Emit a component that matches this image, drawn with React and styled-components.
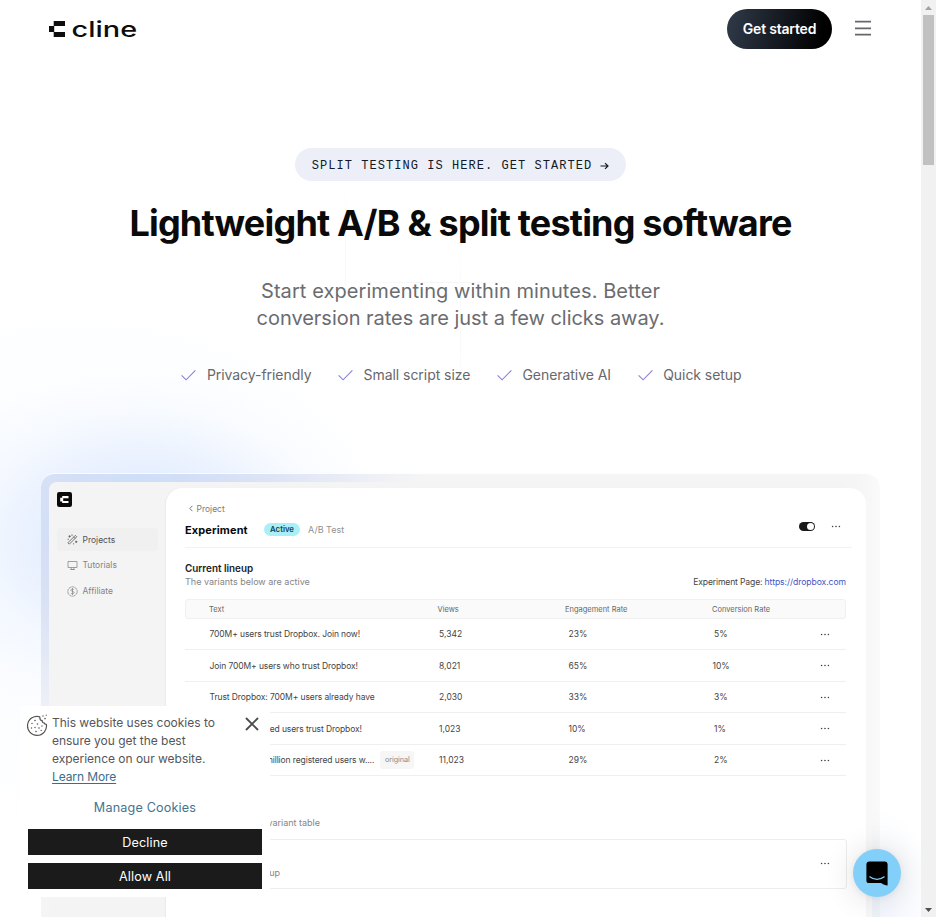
import React from 'react';
import styled, { createGlobalStyle, css } from 'styled-components';

const GlobalStyle = createGlobalStyle`
  *, *::before, *::after { box-sizing: border-box; }
  html, body { margin: 0; padding: 0; overflow: hidden; }
  body { background: #fff; font-family: Inter, sans-serif; color: #0a0a0a; }
  button { font: inherit; border: 0; margin: 0; cursor: pointer; }
  svg { display: block; flex: none; }
`;

const Viewport = styled.div`
  display: flex;
  width: 936px;
  height: 917px;
  overflow: hidden;
`;

const Page = styled.main`
  position: relative;
  flex: 1;
  min-width: 0;
  display: flex;
  flex-direction: column;
  overflow: hidden;
  background:
    linear-gradient(to bottom, transparent, #f9f9fa 40%, #f9f9fa 80%, transparent) 345px 180px / 1px 130px no-repeat,
    linear-gradient(to bottom, transparent, #f9f9fa 40%, #f9f9fa 80%, transparent) 460px 240px / 1px 140px no-repeat,
    linear-gradient(to right, transparent, #f6f6f7 40%, #f6f6f7 70%, transparent) 330px 282px / 200px 1px no-repeat,
    radial-gradient(ellipse 230px 165px at 150px 535px, rgba(200, 220, 253, 0.68), rgba(208, 225, 253, 0.4) 42%, rgba(226, 236, 254, 0.14) 76%, transparent),
    radial-gradient(ellipse 360px 280px at 80px 560px, rgba(224, 235, 255, 0.42), rgba(240, 246, 255, 0.2) 60%, transparent),
    radial-gradient(ellipse 60px 110px at 880px 917px, rgba(225, 233, 252, 0.4), transparent),
    #fff;
`;

const Header = styled.header`
  height: 58px;
  flex: none;
  padding: 0 49px;
  display: flex;
  align-items: center;
  justify-content: space-between;
`;

const HeaderActions = styled.div`
  display: flex;
  align-items: center;
  gap: 22px;
`;

const GetStarted = styled.button`
  width: 105px;
  height: 40px;
  border-radius: 20px;
  background: linear-gradient(100deg, #303a49, #000 90%);
  color: #fff;
  font-size: 14px;
  font-weight: 600;
  letter-spacing: -0.2px;
  padding: 0 0 2px;
`;

const Hero = styled.section`
  display: flex;
  flex-direction: column;
  align-items: center;
  flex: none;
  padding-top: 90px;
`;

const Announcement = styled.a`
  display: flex;
  align-items: center;
  justify-content: center;
  gap: 8px;
  width: 331px;
  height: 33px;
  padding-top: 2px;
  border-radius: 17px;
  background: #eceff7;
  color: #111827;
  font: 12px 'Liberation Mono', monospace;
  letter-spacing: 1.05px;
  white-space: nowrap;
`;

const Title = styled.h1`
  margin: 22px 0 0;
  font-size: 36px;
  line-height: 40px;
  font-weight: 700;
  letter-spacing: -0.81px;
  white-space: nowrap;
`;

const Subtitle = styled.p`
  margin: 35px 0 0;
  width: 430px;
  text-align: center;
  font-size: 20px;
  line-height: 27px;
  color: #6b6c70;
`;

const SubtitleLine = styled.span`
  display: block;
  white-space: nowrap;
  letter-spacing: ${p => p.$tracking}px;
`;

const Features = styled.ul`
  list-style: none;
  margin: 33px 0 0;
  padding: 0 0 0 2px;
  display: flex;
  gap: 26.6px;
`;

const Feature = styled.li`
  display: flex;
  align-items: center;
  gap: 10.5px;
  font-size: 14px;
  line-height: 20px;
  letter-spacing: -0.05px;
  color: #67686c;
  white-space: nowrap;
`;

const Frame = styled.section`
  margin: 88px auto 0;
  width: 839px;
  height: 560px;
  flex: none;
  padding: 8px;
  border-radius: 14px;
  border-top: 1px solid rgba(255, 255, 255, 0.8);
  background:
    radial-gradient(ellipse 290px 250px at 90px 20px, rgba(194, 214, 251, 0.5), rgba(198, 210, 246, 0.3) 60%, transparent),
    linear-gradient(to right, rgba(0, 0, 0, 0.038) 97%, rgba(0, 0, 0, 0.018));
`;

const AppWindow = styled.div`
  display: flex;
  width: 823px;
  height: 552px;
  padding: 5.5px 6px 0 0;
  border-radius: 8px;
  background: linear-gradient(to right, #f4f4f4 96%, #f6f6f6 98.5%, #f8f8f8);
`;

const Sidebar = styled.nav`
  width: 117px;
  padding: 4.5px 8px;
  display: flex;
  flex-direction: column;
`;

const SideList = styled.div`
  margin-top: 21px;
  display: flex;
  flex-direction: column;
  gap: 2.8px;
`;

const SideItem = styled.a`
  display: flex;
  align-items: center;
  gap: 5px;
  height: 23px;
  padding-left: 9.5px;
  border-radius: 4px;
  font-size: 8.5px;
  color: ${p => (p.$active ? '#505050' : '#858585')};
  background: ${p => (p.$active ? '#f0f0f0' : 'transparent')};
`;

const Panel = styled.div`
  width: 700px;
  padding: 15px 20px 0 19px;
  border-radius: 16px 16px 0 0;
  background: #fff;
  box-shadow: -1px 0 1px rgba(0, 0, 0, 0.04);
`;

const Breadcrumb = styled.div`
  display: flex;
  align-items: center;
  gap: 4px;
  height: 12px;
  padding-left: 3.5px;
  font-size: 8.5px;
  color: #7b7b7b;
`;

const ExperimentBar = styled.div`
  display: flex;
  align-items: center;
  height: 17px;
  margin-top: 6px;
`;

const ExperimentName = styled.strong`
  font-size: 11px;
  width: 79px;
  padding-top: 1px;
  letter-spacing: 0.12px;
`;

const StatusPill = styled.span`
  width: 36px;
  height: 13px;
  border-radius: 7px;
  background: #a9effa;
  color: #16434c;
  font-size: 7.8px;
  font-weight: 600;
  line-height: 13px;
  text-align: center;
`;

const TestKind = styled.span`
  margin-left: 8px;
  font-size: 9px;
  color: #919191;
`;

const BarControls = styled.div`
  margin-left: auto;
  margin-top: -6px;
  padding-right: 5px;
  display: flex;
  align-items: center;
  gap: 16px;
`;

const Toggle = styled.span`
  display: flex;
  justify-content: flex-end;
  width: 16px;
  height: 9px;
  padding: 1px;
  border-radius: 5px;
  background: #19191b;
  &::after {
    content: '';
    width: 7px;
    height: 7px;
    border-radius: 50%;
    background: #fff;
  }
`;

const Rule = styled.hr`
  border: 0;
  height: 1px;
  margin: 9.5px -6px 0 0;
  background: #f2f2f2;
`;

const SectionTitle = styled.h2`
  margin: 13px 0 0;
  font-size: 9.9px;
  line-height: 14px;
  font-weight: 600;
  color: #1c1c1c;
`;

const SectionMeta = styled.div`
  display: flex;
  justify-content: space-between;
  height: 14px;
  line-height: 14px;
  font-size: 9px;
  color: #858585;
`;

const PageRef = styled.span`
  font-size: 8.6px;
  letter-spacing: -0.15px;
  color: #444;
  a { color: #4653c6; letter-spacing: -0.07px; }
`;

const columns = css`
  display: grid;
  grid-template-columns: 228.5px 127.5px 147px 1fr 10px;
  align-items: center;
  padding: 0 16px 0 24.5px;
`;

const TableHead = styled.div`
  ${columns}
  width: 661px;
  height: 20px;
  margin-top: 9.5px;
  padding-left: 23px;
  padding-top: 1px;
  border: 1px solid #f0f0f0;
  border-radius: 3px;
  background: #fafafa;
  font-size: 7.5px;
  color: #676767;
`;

const TableRow = styled.div`
  ${columns}
  width: 661px;
  height: 31.5px;
  padding-top: 1px;
  border-bottom: 1px solid #efefef;
  font-size: 8.5px;
  color: #454545;
`;

const Variant = styled.span`
  display: flex;
  align-items: center;
  gap: 6px;
  white-space: nowrap;
  letter-spacing: -0.1px;
`;

const Tag = styled.span`
  width: 34px;
  height: 18px;
  border-radius: 3px;
  background: #f6f6f6;
  color: #8a8a8a;
  font-size: 7.3px;
  line-height: 18px;
  text-align: center;
`;

const Value = styled.span`
  padding-left: ${p => p.$inset || 0}px;
`;

const TableNote = styled.div`
  width: 135px;
  margin-top: 39.5px;
  font-size: 9px;
  line-height: 14px;
  text-align: right;
  white-space: nowrap;
  color: #858585;
`;

const LineupCard = styled.div`
  display: flex;
  width: 662px;
  height: 50px;
  margin-top: 9px;
  padding: 0 16px 0 0;
  align-items: center;
  justify-content: space-between;
  border: 1px solid #ededed;
  border-radius: 3px;
`;

const LineupName = styled.span`
  width: 94px;
  padding-top: 17px;
  text-align: right;
  font-size: 9px;
  color: #858585;
`;

const CookieBanner = styled.aside`
  position: absolute;
  left: 20px;
  top: 706px;
  width: 250px;
  height: 191px;
  padding: 8px;
  display: flex;
  flex-direction: column;
  background: #fff;
`;

const CookieMessage = styled.div`
  display: flex;
  align-items: flex-start;
  margin-left: -1px;
`;

const CookieText = styled.p`
  margin: 0 0 0 4px;
  width: 170px;
  font-size: 12px;
  line-height: 18px;
  letter-spacing: -0.02px;
  color: #55565a;
  a { color: #3d6d8b; text-decoration: underline; text-underline-offset: 2px; letter-spacing: -0.1px; }
`;

const CloseButton = styled.button`
  margin: 3px 0 0 23px;
  padding: 0;
  background: none;
`;

const ManageLink = styled.a`
  margin: 13px 0 12px;
  text-align: center;
  font-size: 12.6px;
  letter-spacing: 0.18px;
  line-height: 18px;
  color: #457491;
`;

const CookieButton = styled.button`
  height: 26px;
  flex: none;
  padding: 0;
  background: #1b1b1b;
  color: #fff;
  font-size: 12.6px;
  letter-spacing: 0.15px;
  & + & { margin-top: 8px; }
`;

const ChatButton = styled.button`
  position: absolute;
  left: 853px;
  top: 849px;
  width: 48px;
  height: 48px;
  padding: 0;
  display: grid;
  place-items: center;
  border-radius: 50%;
  background: #82d0fa;
  box-shadow: 0 1px 6px rgba(0, 0, 0, 0.06), 0 2px 32px rgba(0, 0, 0, 0.14);
`;

const Scrollbar = styled.div`
  width: 15px;
  display: flex;
  flex-direction: column;
  align-items: center;
  background: #f1f1f1;
`;

const ScrollThumb = styled.div`
  width: 11px;
  height: 150px;
  background: #c1c1c1;
`;

const ScrollArrow = styled.div`
  width: 15px;
  height: 15px;
  display: grid;
  place-items: center;
  margin-top: ${p => (p.$end ? 'auto' : 0)};
`;

const Logo = () => (
  <svg width="90" height="24" viewBox="0 0 90 24" role="img" aria-label="cline">
    <path d="M4.700 4H16v5H5.200v6H16v5H4.700v-5H0V9h4.700z" fill="#0d0d0d" />
    <text x="22.600" y="20" fontFamily="Inter, sans-serif" fontSize="21" fontWeight="500" textLength="65.500" lengthAdjust="spacingAndGlyphs" fill="#0d0d0d">cline</text>
  </svg>
);

const MenuIcon = () => (
  <svg width="18" height="18" viewBox="0 0 18 18" stroke="#66676e" strokeWidth="1.7">
    <path d="M1 1.700h16M1 8.300h16M1 14.700h16" />
  </svg>
);

const ArrowIcon = () => (
  <svg width="9" height="9" viewBox="0 0 9 9" fill="none" stroke="#111827" strokeWidth="1.2">
    <path d="M.5 5h7.400M5 2.100l3 2.900-3 2.900" />
  </svg>
);

const CheckIcon = () => (
  <svg width="15" height="12" viewBox="0 0 15 12" fill="none" stroke="#8b80e0" strokeWidth="1.15">
    <path d="M.6 6.300l4.500 4.500L14.400 1.300" />
  </svg>
);

const AppMark = () => (
  <svg width="15" height="15" viewBox="0 0 15 15">
    <rect width="15" height="15" rx="2.2" fill="#0a0a0a" />
    <path d="M5.200 4h6.300v2.200H6.200v2.700h5.300v2.200H5.200V9.500H3.200V5.800h2z" fill="#fff" />
  </svg>
);

const WandIcon = () => (
  <svg width="11" height="11" viewBox="0 0 11 11" fill="none" stroke="#555" strokeWidth=".8" strokeLinecap="round">
    <path d="M1.200 8.500l7.100-7.100 1.400 1.400-7.100 7.100zM6.700 3l1.300 1.400M2.600 1.600v1.600M1.800 2.400h1.600M5 .8v.8M1.200 5v.6M9.200 7v1.600M8.400 7.800h1.600M6.600 9.600v.4" />
  </svg>
);

const MonitorIcon = () => (
  <svg width="11" height="11" viewBox="0 0 11 11" fill="none" stroke="#8a8a8a" strokeWidth=".8" strokeLinejoin="round">
    <path d="M1 1.500h9v6H1zM4.200 7.500v2h2.600v-2M3.200 9.500h4.600" />
  </svg>
);

const DollarIcon = () => (
  <svg width="11" height="11" viewBox="0 0 11 11" fill="none" stroke="#858585" strokeWidth=".75">
    <circle cx="5.5" cy="5.5" r="4.7" strokeDasharray="2.6 .35" />
    <path d="M7 3.900C6.700 3.300 6.100 3.100 5.500 3.100c-.9 0-1.500.4-1.500 1.100 0 .8.7 1 1.500 1.200.9.2 1.600.5 1.600 1.300S6.400 7.900 5.500 7.900c-.8 0-1.400-.3-1.700-.9M5.500 2.100v6.800" />
  </svg>
);

const ChevronIcon = () => (
  <svg width="4" height="7" viewBox="0 0 4 7" fill="none" stroke="#666" strokeWidth=".9">
    <path d="M3.400.8L.8 3.500l2.600 2.700" />
  </svg>
);

const Dots = () => (
  <svg width="10" height="3" viewBox="0 0 10 3" fill="#404040">
    <circle cx="1.6" cy="1.5" r=".8" /><circle cx="5" cy="1.5" r=".8" /><circle cx="8.4" cy="1.5" r=".8" />
  </svg>
);

const CookieIcon = () => (
  <svg width="21" height="23" viewBox="0 0 21 23" fill="none" stroke="#555" strokeWidth="1.2">
    <path d="M12.800 2.800A9.500 9.500 0 1 0 19.400 10.400c-1.200.1-2-.4-2.200-1.500-1.300.1-2.100-.8-1.800-2.100-1.800-.3-2.800-1.800-2.600-4z" strokeLinejoin="round" />
    <g fill="#555" stroke="none">
      <circle cx="8" cy="6.5" r=".8" /><circle cx="5" cy="9.5" r=".7" /><circle cx="10.5" cy="10" r=".8" />
      <circle cx="4.5" cy="14" r=".7" /><circle cx="8" cy="13.5" r=".7" /><circle cx="12" cy="14" r=".8" />
      <circle cx="15" cy="12" r=".7" /><circle cx="9" cy="17.5" r=".8" /><circle cx="14.2" cy="16.4" r=".7" />
      <circle cx="16" cy="2" r=".7" /><circle cx="19.2" cy="1.2" r=".6" /><circle cx="18" cy="4.6" r=".8" />
    </g>
  </svg>
);

const CloseIcon = () => (
  <svg width="14" height="14" viewBox="0 0 14 14" stroke="#4d4d4d" strokeWidth="1.9">
    <path d="M1 1l12 12M13 1L1 13" />
  </svg>
);

const ChatIcon = () => (
  <svg width="22" height="25" viewBox="0 0 22 25">
    <path d="M3 .5h16A2.600 2.600 0 0 1 21.600 3v21.500c-2.200-.2-4.600-1-6.600-2.400H3A2.600 2.600 0 0 1 .4 19.500V3A2.600 2.600 0 0 1 3 .5z" fill="#000" />
    <path d="M3.800 15.800c4 3.400 10.400 3.400 14.400 0" fill="none" stroke="#82d0fa" strokeWidth="1.2" strokeLinecap="round" />
  </svg>
);

const features = ['Privacy-friendly', 'Small script size', 'Generative AI', 'Quick setup'];

const sideItems = [
  { label: 'Projects', Icon: WandIcon, active: true },
  { label: 'Tutorials', Icon: MonitorIcon },
  { label: 'Affiliate', Icon: DollarIcon },
];

const variants = [
  { text: '700M+ users trust Dropbox. Join now!', views: '5,342', engagement: '23%', conversion: '5%' },
  { text: 'Join 700M+ users who trust Dropbox!', views: '8,021', engagement: '65%', conversion: '10%' },
  { text: 'Trust Dropbox: 700M+ users already have', views: '2,030', engagement: '33%', conversion: '3%' },
  { text: '700M+ registered users trust Dropbox!', views: '1,023', engagement: '10%', conversion: '1%' },
  { text: 'Join over 700 million registered users w....', views: '11,023', engagement: '29%', conversion: '2%', original: true },
];

export default function App() {
  return (
    <Viewport>
      <GlobalStyle />
      <Page>
        <Header>
          <Logo />
          <HeaderActions>
            <GetStarted>Get started</GetStarted>
            <MenuIcon />
          </HeaderActions>
        </Header>

        <Hero>
          <Announcement>SPLIT TESTING IS HERE. GET STARTED<ArrowIcon /></Announcement>
          <Title>Lightweight A/B &amp; split testing software</Title>
          <Subtitle>
            <SubtitleLine $tracking={0.08}>Start experimenting within minutes. Better</SubtitleLine>
            <SubtitleLine $tracking={-0.03}>conversion rates are just a few clicks away.</SubtitleLine>
          </Subtitle>
          <Features>
            {features.map(name => <Feature key={name}><CheckIcon />{name}</Feature>)}
          </Features>
        </Hero>

        <Frame>
          <AppWindow>
            <Sidebar>
              <AppMark />
              <SideList>
                {sideItems.map(({ label, Icon, active }) => (
                  <SideItem key={label} $active={active}><Icon />{label}</SideItem>
                ))}
              </SideList>
            </Sidebar>
            <Panel>
              <Breadcrumb><ChevronIcon />Project</Breadcrumb>
              <ExperimentBar>
                <ExperimentName>Experiment</ExperimentName>
                <StatusPill>Active</StatusPill>
                <TestKind>A/B Test</TestKind>
                <BarControls><Toggle /><Dots /></BarControls>
              </ExperimentBar>
              <Rule />
              <SectionTitle>Current lineup</SectionTitle>
              <SectionMeta>
                The variants below are active
                <PageRef>Experiment Page: <a>https://dropbox.com</a></PageRef>
              </SectionMeta>
              <TableHead>
                <span>Text</span><span>Views</span><span>Engagement Rate</span><span>Conversion Rate</span>
              </TableHead>
              {variants.map(v => (
                <TableRow key={v.text}>
                  <Variant>{v.text}{v.original && <Tag>original</Tag>}</Variant>
                  <Value $inset={1}>{v.views}</Value>
                  <Value $inset={3}>{v.engagement}</Value>
                  <Value $inset={v.conversion.length > 2 ? 0 : 1.5}>{v.conversion}</Value>
                  <Dots />
                </TableRow>
              ))}
              <TableNote>Edit variants in the variant table</TableNote>
              <LineupCard>
                <LineupName>Next lineup</LineupName>
                <Dots />
              </LineupCard>
            </Panel>
          </AppWindow>
        </Frame>

        <CookieBanner>
          <CookieMessage>
            <CookieIcon />
            <CookieText>
              This website uses cookies to ensure you get the best experience on our website. <br /><a>Learn More</a>
            </CookieText>
            <CloseButton aria-label="Close"><CloseIcon /></CloseButton>
          </CookieMessage>
          <ManageLink>Manage Cookies</ManageLink>
          <CookieButton>Decline</CookieButton>
          <CookieButton>Allow All</CookieButton>
        </CookieBanner>

        <ChatButton aria-label="Open chat"><ChatIcon /></ChatButton>
      </Page>

      <Scrollbar>
        <ScrollArrow>
          <svg width="7" height="4" viewBox="0 0 7 4"><path d="M0 4l3.500-4L7 4z" fill="#a3a3a3" /></svg>
        </ScrollArrow>
        <ScrollThumb />
        <ScrollArrow $end>
          <svg width="7" height="4" viewBox="0 0 7 4"><path d="M0 0l3.500 4L7 0z" fill="#505050" /></svg>
        </ScrollArrow>
      </Scrollbar>
    </Viewport>
  );
}
